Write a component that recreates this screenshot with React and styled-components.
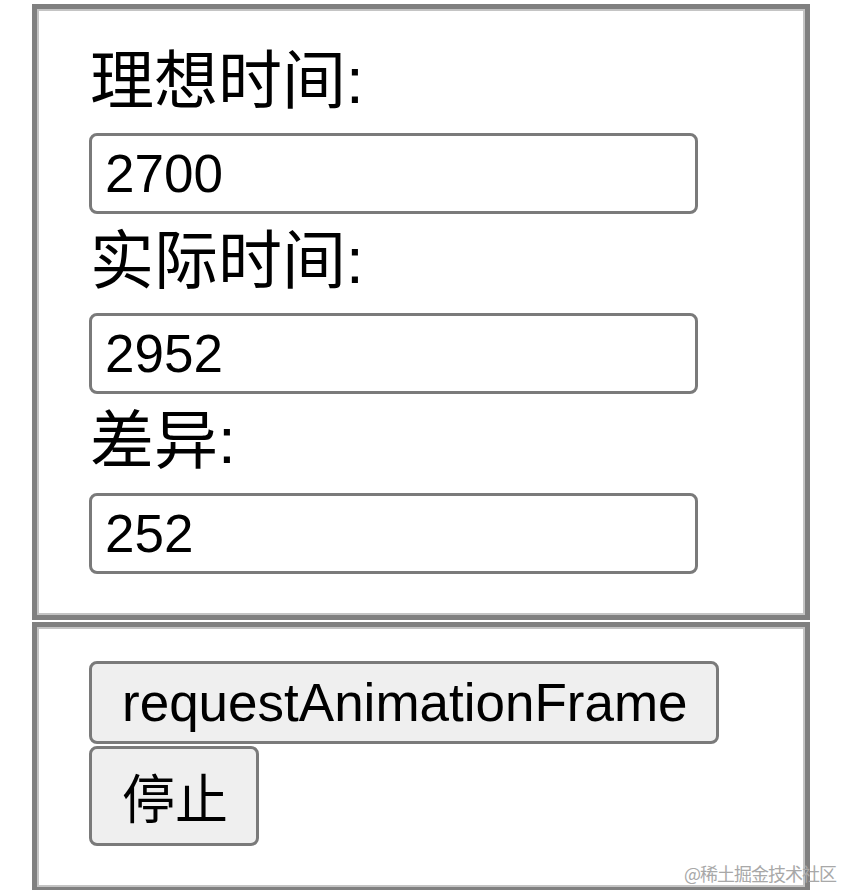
import styled, { createGlobalStyle } from "styled-components";

const GlobalStyle = createGlobalStyle`
  body {
    margin: 0;
    background: #ffffff;
    font-family: "Liberation Sans", "Noto Sans CJK SC", sans-serif;
  }
`;

const fields = [
  { label: "理想时间:", value: "2700" },
  { label: "实际时间:", value: "2952" },
  { label: "差异:", value: "252" },
];

const App = () => {
  return (
    <Page>
      <GlobalStyle />
      <Panel $padTop={25}>
        {fields.map((field) => (
          <Field key={field.label}>
            <Label>{field.label}</Label>
            <Input type="text" defaultValue={field.value} readOnly />
          </Field>
        ))}
      </Panel>

      <Panel $padTop={34}>
        <Actions>
          <Button type="button">requestAnimationFrame</Button>
          <Button type="button" $cjk>
            停止
          </Button>
        </Actions>
      </Panel>

      <Watermark>@稀土掘金技术社区</Watermark>
    </Page>
  );
};
export default App;

// 页面外层
const Page = styled.div`
  position: relative;
  width: 810px;
  height: 890px;
  padding: 4px 0 0 32px;
  box-sizing: border-box;
  display: flex;
  flex-direction: column;
  gap: 2px;
`;

// 灰色边框面板
const Panel = styled.div`
  border: 5px solid #808080;
  box-shadow: inset 0 0 0 2px #c4c4c4;
  box-sizing: border-box;
  padding: ${(props) => props.$padTop}px 0 41px 52px;
`;

// 一行: 标题 + 输入框
const Field = styled.div`
  display: flex;
  flex-direction: column;
`;

const Label = styled.div`
  height: 99px;
  line-height: 94px;
  font-size: 64px;
  color: #000;
  padding-left: 1px;
`;

const Input = styled.input`
  width: 609px;
  height: 81px;
  box-sizing: border-box;
  border: 3px solid #7a7a7a;
  border-radius: 8px;
  padding: 0 0 0 13px;
  margin: 0;
  font-family: "Liberation Sans", sans-serif;
  font-size: 53px;
  color: #000;
  background: #fff;
  outline: none;
`;

// 按钮区域
const Actions = styled.div`
  display: flex;
  flex-direction: column;
  align-items: flex-start;
  gap: 2px;
`;

const Button = styled.button`
  margin: 0;
  padding: ${(props) => (props.$cjk ? "9px" : "8px")} 28px
    ${(props) => (props.$cjk ? "9px" : "8px")} 30px;
  border: 3px solid #7a7a7a;
  border-radius: 8px;
  background: #efefef;
  font-family: "Liberation Sans", "Noto Sans CJK SC", sans-serif;
  font-size: 53px;
  color: #000;
  cursor: pointer;
`;

// 右下角水印
const Watermark = styled.span`
  position: absolute;
  right: -26px;
  bottom: 4px;
  font-family: "Noto Sans CJK SC", sans-serif;
  font-size: 18px;
  color: #a8a8a8;
  letter-spacing: -1px;
`;
